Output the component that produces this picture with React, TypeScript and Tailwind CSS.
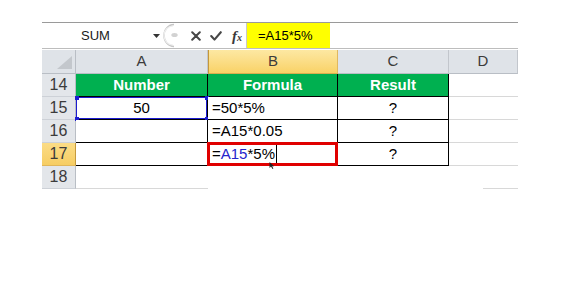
import type { ReactNode } from "react";

// Excel 2010 style formula bar + a small grid (A14:D18)

const font = "font-['Liberation_Sans',Arial,sans-serif]";

function FormulaBar() {
  return (
    <div className="flex h-[27px] w-[476px] items-center border-t border-b border-t-[#9a9a9a] border-b-[#bdbdbd] bg-white">
      {/* name box */}
      <div className="flex h-full w-[121px] items-center justify-between pl-[39px] pr-[3px]">
        <span className="text-[13px] leading-none text-[#1a1a1a]">SUM</span>
        <svg width="7" height="4" viewBox="0 0 7 4">
          <path d="M0 0 H7 L3.5 4 Z" fill="#333" />
        </svg>
      </div>
      {/* splitter grip */}
      <svg width="16" height="25" viewBox="0 0 16 25" className="shrink-0">
        <path d="M11 1.5 A10 11 0 0 0 11 23.5" fill="none" stroke="#c6c6c6" strokeWidth="1.5" />
        <path d="M10 3 A9 9.5 0 0 0 10 22" fill="none" stroke="#eeeeee" strokeWidth="1.2" />
        <ellipse cx="11.5" cy="12" rx="3.2" ry="2" fill="#d2d2d2" />
      </svg>
      {/* cancel */}
      <svg width="10" height="10" viewBox="0 0 10 10" className="ml-[12px] shrink-0">
        <path d="M1.2 1.2 L8.8 8.8 M8.8 1.2 L1.2 8.8" stroke="#474747" strokeWidth="2" strokeLinecap="round" />
      </svg>
      {/* enter */}
      <svg width="12" height="10" viewBox="0 0 12 10" className="ml-[9px] shrink-0">
        <path d="M1.2 5 L4.5 8.6 L10.8 1.2" fill="none" stroke="#474747" strokeWidth="2.1" strokeLinecap="round" strokeLinejoin="round" />
      </svg>
      {/* insert function */}
      <span className="ml-[10px] w-[14px] shrink-0 font-['Liberation_Serif',serif] font-bold italic leading-none text-[#3a3a3a]">
        <span className="text-[15px]">f</span>
        <span className="text-[10px]">x</span>
      </span>
      {/* formula input, highlighted */}
      <div className="flex h-full w-[84px] items-center border-l border-[#c8c8c8] bg-[#ffff00] pl-[11px]">
        <span className="text-[13px] leading-none text-black">=A15*5%</span>
      </div>
    </div>
  );
}

function RowHead({ n, active }: { n: number; active?: boolean }) {
  return (
    <div
      className={
        active
          ? "flex items-center justify-center border-r border-b border-r-[#c59a3e] border-b-[#e0b65a] bg-gradient-to-b from-[#fbdc86] to-[#f6cd63] text-[16px] text-[#3b3b3b]"
          : "flex items-center justify-center border-r border-b border-r-[#b9bec5] border-b-[#cdd1d7] bg-[#e3e6ea] text-[16px] text-[#3b3b3b]"
      }
    >
      {n}
    </div>
  );
}

function ColHead({ label, active }: { label: string; active?: boolean }) {
  return (
    <div
      className={
        active
          ? "flex items-center justify-center border-r border-b border-l border-l-[#c5983a] border-r-[#e0b860] border-b-[#d9ad4f] bg-gradient-to-b from-[#fde8a2] to-[#f9d266] text-[15px] text-[#3b3b3b]"
          : "flex items-center justify-center border-r border-b border-r-[#c2c6cc] border-b-[#b9bec5] bg-[#dfe3e8] text-[15px] text-[#3b3b3b]"
      }
    >
      {label}
    </div>
  );
}

function Cell({
  children,
  align = "center",
  green,
  className = "",
}: {
  children?: ReactNode;
  align?: "center" | "left";
  green?: boolean;
  className?: string;
}) {
  return (
    <div
      className={`relative flex items-center border-r border-b border-black text-[15px] ${
        align === "center" ? "justify-center" : "justify-start pl-[4px]"
      } ${green ? "bg-[#00b050] font-bold text-white" : "bg-white text-black"} ${className}`}
    >
      {children}
    </div>
  );
}

function Blank() {
  return <div className="border-b border-[#d8d8d8] bg-white" />;
}

function Handle({ pos }: { pos: string }) {
  return <span className={`absolute h-[4px] w-[4px] bg-[#1c1cd0] ${pos}`} />;
}

function Grid() {
  return (
    <div className="mt-[1px] grid w-[476px] grid-cols-[34px_132px_130px_111px_69px] grid-rows-[24px_23px_23px_23px_23px_23px]">
      {/* header row */}
      <div className="relative border-r border-b border-r-[#b9bec5] border-b-[#b9bec5] bg-[#dfe3e8]">
        <svg width="15" height="13" viewBox="0 0 15 13" className="absolute right-[3px] bottom-[4px]">
          <path d="M15 0 V13 H0 Z" fill="#c3c7cc" />
        </svg>
      </div>
      <ColHead label="A" />
      <ColHead label="B" active />
      <ColHead label="C" />
      <ColHead label="D" />

      {/* 14 */}
      <RowHead n={14} />
      <Cell green>Number</Cell>
      <Cell green>Formula</Cell>
      <Cell green>Result</Cell>
      <Blank />

      {/* 15 */}
      <RowHead n={15} />
      <Cell>
        50
        <span className="absolute inset-0 border border-[#1c1cd0]" />
        <Handle pos="-left-[1px] -top-[1px]" />
        <Handle pos="-right-[2px] -top-[1px]" />
        <Handle pos="-left-[1px] -bottom-[2px]" />
        <Handle pos="-right-[2px] -bottom-[2px]" />
      </Cell>
      <Cell align="left">=50*5%</Cell>
      <Cell>?</Cell>
      <Blank />

      {/* 16 */}
      <RowHead n={16} />
      <Cell />
      <Cell align="left">=A15*0.05</Cell>
      <Cell>?</Cell>
      <Blank />

      {/* 17 — editing B17 */}
      <RowHead n={17} active />
      <Cell />
      <Cell align="left">
        <span>
          =<span className="text-[#2424cc]">A15</span>*5%
        </span>
        <span className="ml-[1px] h-[18px] w-px bg-black" />
        <span className="absolute -top-[1px] -left-[1px] -right-[1px] -bottom-[1px] border-[3px] border-[#e00000]" />
        <svg width="6" height="7" viewBox="0 0 6 7" className="absolute top-[19px] left-[61px]">
          <path d="M0.5 0 L0.5 6 L2 4.6 L3.5 7 L4.4 6.5 L3.1 4.2 L5.2 4.2 Z" fill="#222" />
        </svg>
      </Cell>
      <Cell>?</Cell>
      <Blank />

      {/* 18 */}
      <RowHead n={18} />
      <div className="border-b border-[#d8d8d8] bg-white" />
      <div className="bg-white" />
      <div className="bg-white" />
      <div className="flex justify-end bg-white">
        <div className="h-full w-[35px] border-b border-[#d8d8d8]" />
      </div>
    </div>
  );
}

export default function App() {
  return (
    <div className={`h-[288px] w-[581px] overflow-hidden bg-white pt-[22px] pl-[42px] ${font}`}>
      <FormulaBar />
      <Grid />
    </div>
  );
}
